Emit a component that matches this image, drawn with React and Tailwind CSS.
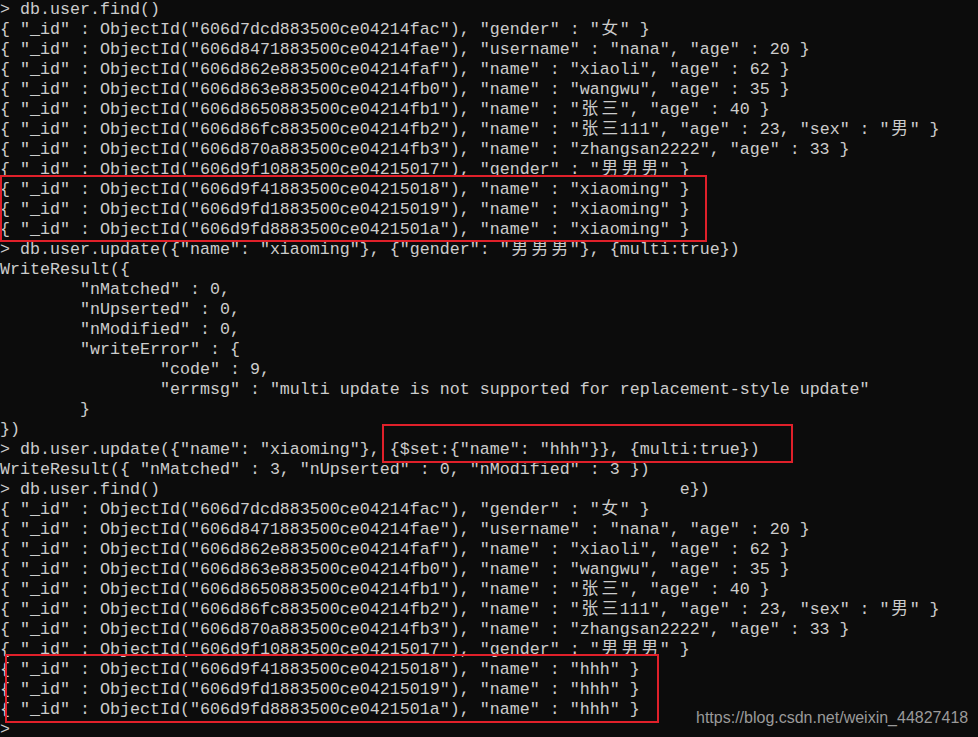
import React from 'react';

const findRows = (last) => [
  '{ "_id" : ObjectId("606d7dcd883500ce04214fac"), "gender" : "女" }',
  '{ "_id" : ObjectId("606d8471883500ce04214fae"), "username" : "nana", "age" : 20 }',
  '{ "_id" : ObjectId("606d862e883500ce04214faf"), "name" : "xiaoli", "age" : 62 }',
  '{ "_id" : ObjectId("606d863e883500ce04214fb0"), "name" : "wangwu", "age" : 35 }',
  '{ "_id" : ObjectId("606d8650883500ce04214fb1"), "name" : "张三", "age" : 40 }',
  '{ "_id" : ObjectId("606d86fc883500ce04214fb2"), "name" : "张三111", "age" : 23, "sex" : "男" }',
  '{ "_id" : ObjectId("606d870a883500ce04214fb3"), "name" : "zhangsan2222", "age" : 33 }',
  '{ "_id" : ObjectId("606d9f10883500ce04215017"), "gender" : "男男男" }',
  `{ "_id" : ObjectId("606d9f41883500ce04215018"), "name" : "${last}" }`,
  `{ "_id" : ObjectId("606d9fd1883500ce04215019"), "name" : "${last}" }`,
  `{ "_id" : ObjectId("606d9fd8883500ce0421501a"), "name" : "${last}" }`,
];

const lines = [
  '> db.user.find()',
  ...findRows('xiaoming'),
  '> db.user.update({"name": "xiaoming"}, {"gender": "男男男"}, {multi:true})',
  'WriteResult({',
  '        "nMatched" : 0,',
  '        "nUpserted" : 0,',
  '        "nModified" : 0,',
  '        "writeError" : {',
  '                "code" : 9,',
  '                "errmsg" : "multi update is not supported for replacement-style update"',
  '        }',
  '})',
  '> db.user.update({"name": "xiaoming"}, {$set:{"name": "hhh"}}, {multi:true})',
  'WriteResult({ "nMatched" : 3, "nUpserted" : 0, "nModified" : 3 })',
  '> db.user.find()                                                    e})',
  ...findRows('hhh'),
  '>',
];

// wide (CJK) characters take two console cells
const Line = ({ text }) => {
  const parts = [];
  let buf = '';
  [...text].forEach((ch, i) => {
    if (/[\u4e00-\u9fff]/.test(ch)) {
      if (buf) parts.push(buf);
      buf = '';
      parts.push(
        <span key={i} className="inline-block w-[20px] text-center">
          {ch}
        </span>
      );
    } else {
      buf += ch;
    }
  });
  if (buf) parts.push(buf);
  return <div className="h-[20px] whitespace-pre">{parts}</div>;
};

export default function App() {
  return (
    <div className="relative w-[978px] h-[737px] overflow-hidden bg-[#0c0c0c]">
      <div
        className="text-[16.667px] leading-[20px] text-[#cccccc]"
        style={{ fontFamily: '"Liberation Mono", "Noto Sans CJK SC", monospace' }}
      >
        {lines.map((l, i) => (
          <Line key={i} text={l} />
        ))}
      </div>

      <div className="absolute left-0 top-[175px] w-[707px] h-[67px] border-2 border-[#e0202a]" />
      <div className="absolute left-[382px] top-[424px] w-[411px] h-[39px] border-2 border-[#e0202a]" />
      <div className="absolute left-[5px] top-[654px] w-[654px] h-[69px] border-2 border-[#e0202a]" />

      <div
        className="absolute left-[696px] top-[706px] text-[16px] text-[#9a9a9a]"
        style={{ fontFamily: '"Liberation Sans", Arial, sans-serif' }}
      >
        https://blog.csdn.net/weixin_44827418
      </div>
    </div>
  );
}
